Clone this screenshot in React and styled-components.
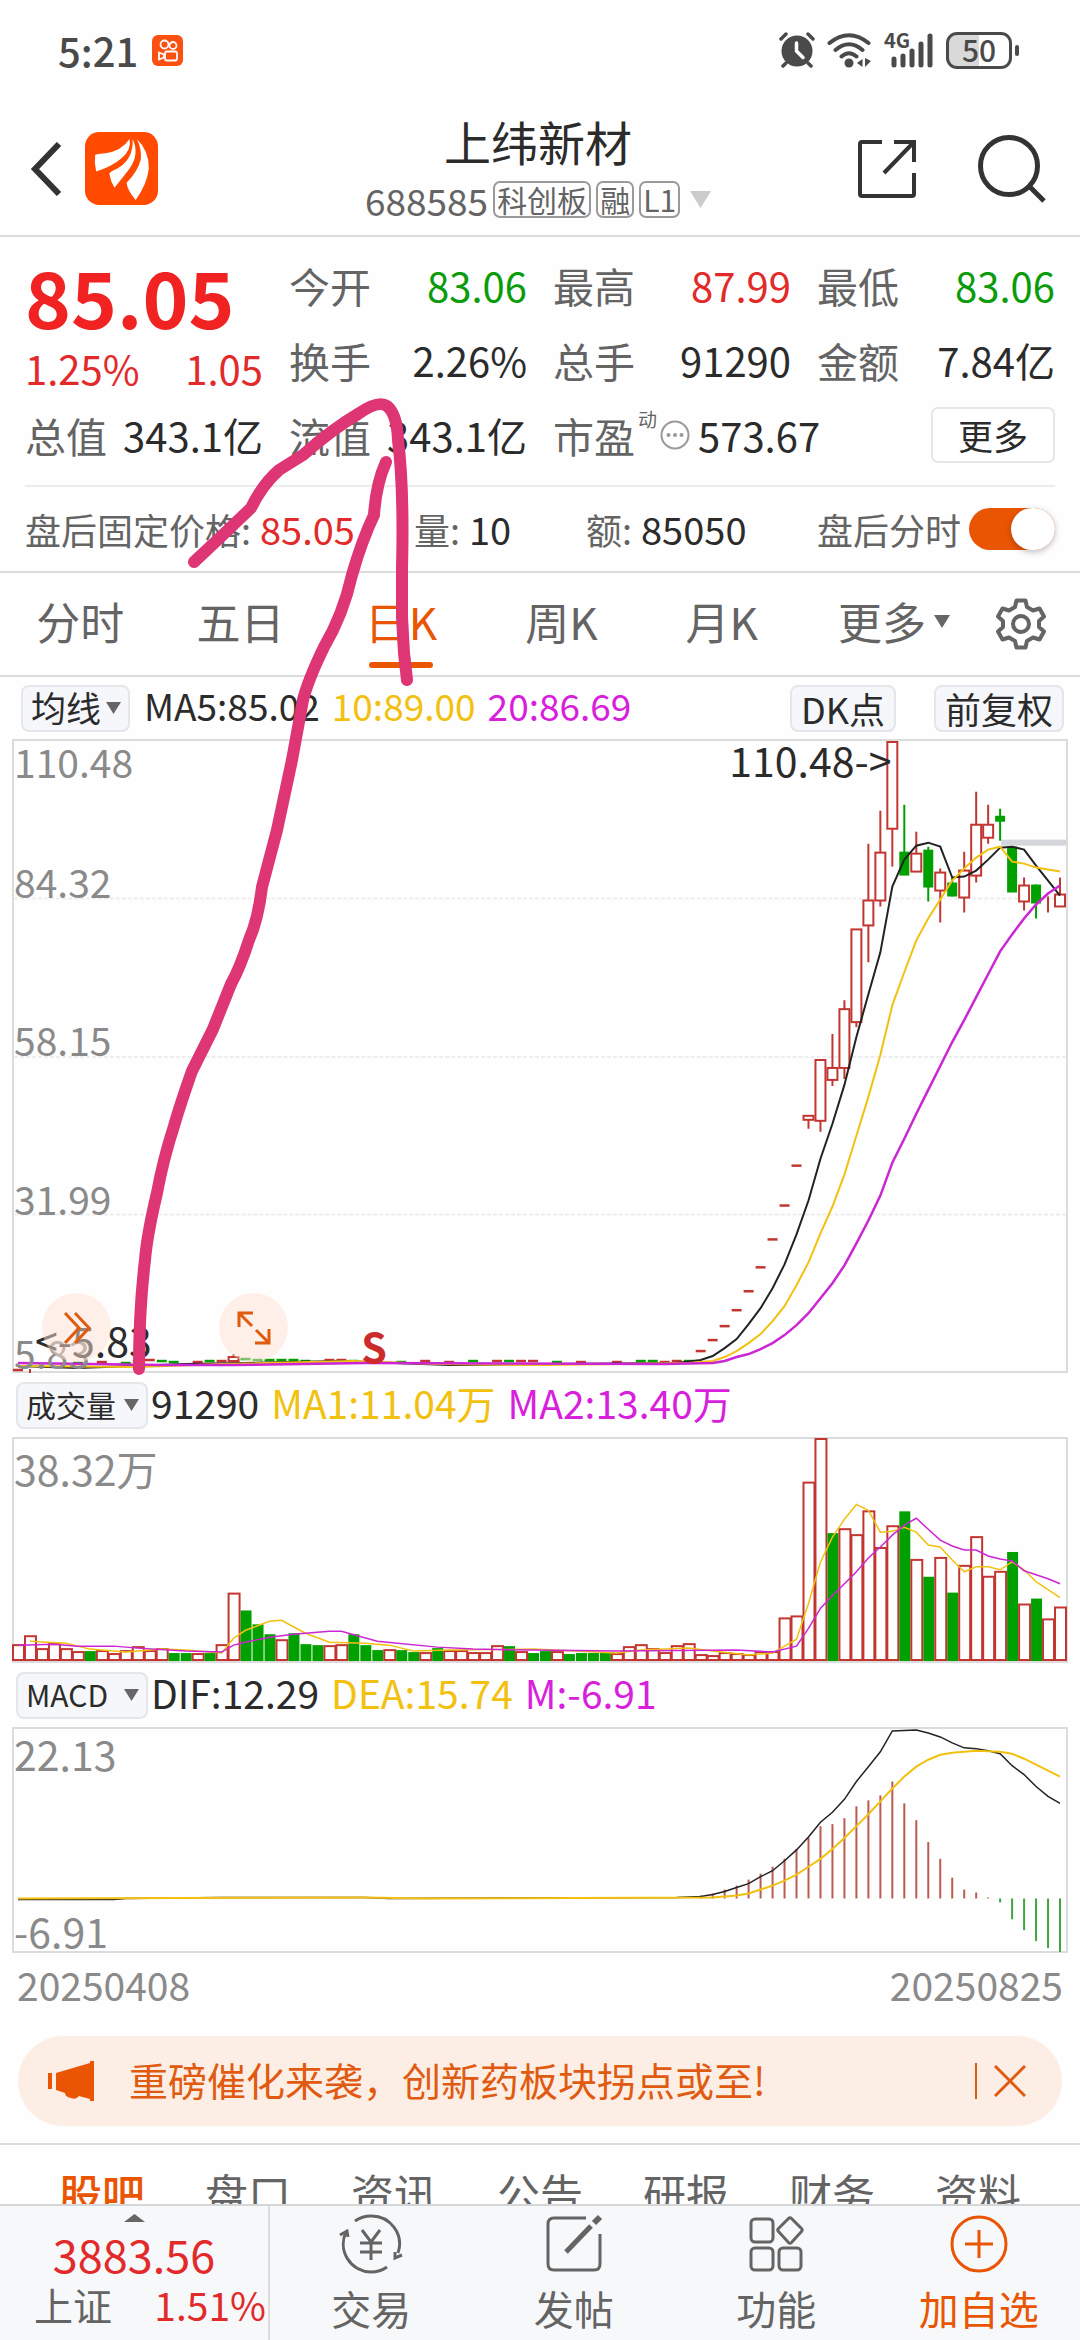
import React, { useState } from 'react';
import styled, { createGlobalStyle } from 'styled-components';

const RED = '#e22a2a';
const GREEN = '#0a9c0a';
const ORANGE = '#ea5504';
const INK = '#2b2b2b';
const GRAY = '#646464';
const YELLOW = '#f2c10f';
const PURPLE = '#d81fdc';
const BAR_RED = '#c23531';
const BAR_GREEN = '#00a000';

const STEP = 12;

// [index, high, top, bottom, low, up?] in chart units
const candles = [
    [66, 376, 376, 380, 389, 1], [67, 320, 320, 381, 392, 1], [68, 294, 328, 340, 346, 1],
    [69, 260, 269, 328, 339, 1], [70, 189, 189, 282, 287, 1], [71, 103, 160, 185, 222, 1],
    [72, 70, 112, 160, 166, 1], [73, 1, 1, 88, 126, 1], [74, 64, 112, 134, 134, 0],
    [75, 91, 113, 131, 131, 1], [76, 106, 110, 146, 161, 0], [77, 128, 132, 150, 182, 1],
    [78, 137, 143, 155, 156, 0], [79, 111, 130, 157, 172, 1], [80, 51, 84, 135, 142, 1],
    [81, 64, 84, 97, 103, 1], [82, 68, 76, 80, 100, 0], [83, 107, 107, 151, 151, 0],
    [84, 137, 145, 161, 170, 1], [85, 144, 145, 162, 178, 0], [86, 156, 161, 161, 172, 1],
    [87, 137, 154, 166, 166, 1], [18, 615, 618, 622, 622, 1], [1, 630, 631, 631, 634, 1],
];

// one-price days, drawn as short dashes: [index, y, up?]
const dashes = [
    [0, 631, 1], [5, 624, 0], [7, 623, 1], [9, 624, 0], [10, 622, 1], [11, 621, 1], [12, 622, 0],
    [13, 623, 0], [15, 623, 1], [16, 622, 0], [17, 622, 1], [19, 620, 0], [20, 621, 0], [21, 621, 0],
    [22, 621, 0], [23, 621, 0], [24, 622, 0], [26, 621, 1], [27, 621, 1], [28, 622, 0], [30, 623, 0],
    [32, 623, 0], [34, 622, 1], [36, 623, 1], [38, 622, 0], [40, 622, 1], [41, 622, 0], [42, 622, 1],
    [43, 622, 1], [45, 623, 0], [47, 623, 1], [50, 623, 1], [52, 622, 0], [53, 622, 0], [54, 623, 1],
    [55, 622, 1], [56, 622, 0], [57, 612, 1], [58, 601, 1], [59, 587, 1], [60, 571, 1], [61, 552, 1],
    [62, 528, 1], [63, 500, 1], [64, 466, 1], [65, 426, 1],
];

const ma5 = [
    [0, 627], [5, 629], [14, 625], [27, 622], [36, 626], [45, 625], [55, 624], [57, 621], [58, 617], [59, 609],
    [60, 600], [61, 585], [62, 569], [63, 549], [64, 525], [65, 495], [66, 461], [67, 419], [68, 384],
    [69, 345], [70, 297], [71, 254], [72, 212], [73, 146], [74, 119], [75, 105], [76, 102], [77, 106],
    [78, 137], [79, 136], [80, 130], [81, 119], [82, 107], [83, 106], [84, 109], [85, 125], [86, 140], [87, 155],
];
const ma10 = [
    [0, 627], [10, 628], [17, 625], [28, 622], [35, 625], [44, 626], [56, 624], [58, 622], [59, 618], [60, 612],
    [61, 604], [62, 595], [63, 582], [64, 567], [65, 546], [66, 523], [67, 494], [68, 467], [69, 435],
    [70, 396], [71, 357], [72, 315], [73, 265], [74, 232], [75, 200], [76, 178], [77, 159], [78, 140],
    [79, 128], [80, 117], [81, 109], [82, 106], [83, 121], [84, 123], [85, 127], [86, 129], [87, 131],
];
const ma20 = [
    [0, 624], [12, 626], [18, 626], [29, 624], [54, 625], [58, 624], [59, 622], [60, 618], [61, 615], [62, 610],
    [63, 604], [64, 596], [65, 586], [66, 574], [67, 559], [68, 544], [69, 526], [70, 504], [71, 481],
    [72, 456], [73, 423], [74, 399], [75, 374], [76, 350], [77, 326], [78, 302], [79, 280], [80, 257],
    [81, 234], [82, 211], [83, 194], [84, 178], [85, 164], [86, 153], [87, 145],
];

// negative = green day
const volumes = [
    18, 27, 14, 19, 14, 11, -11, 12, 9, 12, 16, 12, 14, -9, -9, 9, -9, 18, 70, -52, -38, -28,
    23, -29, -18, -17, 17, 18, -28, -17, -12, 13, -12, -10, 10, -14, 12, 12, 10, 10, 17, -16,
    11, -9, -11, 11, -8, -9, -9, -9, 9, 16, 18, 14, 10, 17, 19, 8, 7, 10, 9, 8, 11, 11, 45, 47,
    182, 226, -130, 135, 129, 153, 116, 138, -152, 104, -86, 106, -70, 98, 127, 87, 92, -111,
    59, -64, 44, 56,
];
const volMa1 = [
    [1, 204], [4, 206], [6, 212], [9, 215], [12, 212], [14, 213], [17, 216], [18, 201], [19, 193], [21, 184],
    [22, 183], [24, 196], [26, 205], [29, 206], [31, 208], [33, 214], [36, 213], [43, 212], [50, 216],
    [52, 213], [56, 211], [58, 214], [61, 218], [63, 216], [65, 202], [66, 166], [67, 124], [68, 99],
    [69, 81], [70, 66], [71, 72], [72, 94], [73, 93], [74, 89], [75, 94], [76, 107], [77, 109], [78, 122],
    [79, 134], [80, 129], [81, 129], [82, 132], [83, 124], [84, 132], [85, 144], [86, 152], [87, 160],
];
const volMa2 = [
    [0, 208], [3, 207], [5, 209], [8, 209], [10, 211], [14, 214], [17, 215], [18, 208], [19, 205], [21, 200],
    [23, 197], [26, 194], [27, 194], [30, 204], [35, 210], [38, 212], [43, 213], [50, 214], [60, 213],
    [63, 215], [65, 209], [66, 191], [67, 171], [68, 158], [69, 146], [70, 134], [71, 120], [72, 109],
    [73, 97], [74, 87], [75, 80], [76, 91], [77, 102], [78, 108], [79, 112], [80, 112], [81, 118],
    [82, 121], [83, 123], [84, 133], [85, 137], [86, 141], [87, 146],
];

const MACD_ZERO = 171;
const macdFrom = 57;
const macdBars = [
    169, 167, 163, 159, 153, 147, 140, 132, 122, 111, 99, 97, 91, 79, 73, 68, 54, 76, 93, 115,
    132, 151, 163, 166, 171, 176, 193, 204, 215, 222, 226,
];
const dif = [
    [0, 172], [8, 172], [9, 171], [17, 170], [29, 170], [31, 171], [55, 170], [57, 169], [58, 167], [59, 164],
    [60, 160], [61, 156], [62, 149], [63, 143], [64, 133], [65, 122], [66, 109], [67, 94], [68, 84],
    [69, 71], [70, 53], [71, 38], [72, 23], [73, 2], [75, 1], [76, 4], [77, 8], [78, 14], [79, 19],
    [80, 20], [81, 22], [82, 25], [83, 37], [84, 46], [85, 58], [86, 68], [87, 75],
];
const dea = [
    [0, 171], [29, 170], [34, 171], [58, 170], [60, 168], [61, 166], [62, 162], [63, 158], [64, 153], [65, 147],
    [66, 139], [67, 131], [68, 121], [69, 110], [70, 98], [71, 86], [72, 73], [73, 60], [74, 48],
    [75, 38], [76, 31], [77, 26], [78, 24], [79, 23], [80, 22], [82, 23], [83, 25], [84, 30], [85, 36],
    [86, 42], [87, 48],
];

const cx = (i) => i * STEP + 4;
const toPoints = (list) => list.map(([i, y]) => `${cx(i)},${y}`).join(' ');

const GlobalStyle = createGlobalStyle`
    * { box-sizing: border-box; }
    body {
        margin: 0;
        background: #fefefe;
        color: ${INK};
        font-family: 'Noto Sans CJK SC', 'Noto Sans', sans-serif;
    }
    button, select, input { font: inherit; color: inherit; margin: 0; }
    button { border: 0; padding: 0; background: none; }
    svg { display: block; flex: none; }
`;

const Page = styled.div`
    position: relative;
    display: flex;
    flex-direction: column;
    height: 100vh;
    overflow: hidden;
`;

const Content = styled.main`
    flex: 1;
    min-height: 0;
    overflow: hidden;
`;

const StatusBar = styled.div`
    display: flex;
    align-items: center;
    justify-content: space-between;
    height: 100px;
    padding: 0 62px 0 58px;
    color: #4a4a4a;
`;

const StatusGroup = styled.div`
    display: flex;
    align-items: center;
    gap: ${({ $gap }) => $gap}px;
`;

const Clock = styled.span`
    font-size: 40px;
    font-weight: 500;
    line-height: 48px;
`;

const Signal = styled.span`
    position: relative;
    display: block;
`;

const NetworkType = styled.span`
    position: absolute;
    top: -5px;
    left: 0;
    font-size: 20px;
    font-weight: 700;
    line-height: 24px;
`;

const Battery = styled.span`
    position: relative;
    width: 66px;
    height: 37px;
    margin-right: 6px;
    border: 3px solid #4a4a4a;
    border-radius: 11px;
    background: linear-gradient(90deg, #d9d9d9 50%, #fff 50%);
    font-size: 30px;
    font-weight: 500;
    line-height: 29px;
    text-align: center;

    &::after {
        content: '';
        position: absolute;
        top: 10px;
        right: -10px;
        width: 4px;
        height: 11px;
        border-radius: 2px;
        background: #4a4a4a;
    }
`;

const Header = styled.header`
    display: grid;
    grid-template-columns: 1fr auto 1fr;
    align-items: center;
    height: 137px;
    padding: 2px 34px 0 30px;
    border-bottom: 2px solid #dcdcdc;
`;

const HeaderSide = styled.div`
    display: flex;
    align-items: center;
    justify-content: ${({ $end }) => ($end ? 'flex-end' : 'flex-start')};
    gap: ${({ $end }) => ($end ? 62 : 23)}px;
`;

const TitleBox = styled.div`
    display: flex;
    flex-direction: column;
    align-items: center;
    padding-bottom: 4px;
`;

const Title = styled.h1`
    margin: 0;
    font-size: 47px;
    font-weight: 400;
    line-height: 66px;
`;

const SubTitle = styled.div`
    display: flex;
    align-items: center;
    gap: 5px;
    color: ${GRAY};
    font-size: 37px;
    line-height: 52px;

    svg { margin-left: 5px; }
`;

const Tag = styled.span`
    padding: 0 2px;
    border: 2px solid #9a9a9a;
    border-radius: 7px;
    font-size: 30px;
    line-height: 33px;
`;

const Quote = styled.section`
    padding: 10px 25px 0;
    border-bottom: 2px solid #dcdcdc;
`;

const QuoteGrid = styled.div`
    display: grid;
    grid-template-columns: repeat(4, 1fr);
    grid-auto-rows: 75px;
    column-gap: 26px;
    padding-bottom: 13px;
    border-bottom: 2px solid #ececec;
`;

const PriceBox = styled.div`
    grid-row: span 2;
    color: ${RED};
`;

const Price = styled.div`
    color: #f02222;
    font-size: 78px;
    font-weight: 700;
    line-height: 96px;
`;

const Row = styled.div`
    display: flex;
    align-items: center;
    justify-content: space-between;
    grid-column: span ${({ $span }) => $span || 1};
    font-size: 40px;
    line-height: 50px;
    white-space: nowrap;
`;

const Label = styled.span`
    color: ${GRAY};
`;

const RowLabel = styled(Label)`
    font-size: 41px;
`;

const Value = styled.span`
    color: ${({ $color }) => $color || INK};
`;

const PeGroup = styled.span`
    display: flex;
    align-items: center;
`;

const Dynamic = styled.sup`
    align-self: flex-start;
    margin: 0 3px;
    color: ${GRAY};
    font-size: 19px;
    line-height: 18px;
`;

const PeValue = styled(Value)`
    margin-left: 8px;
`;

const MoreButton = styled.button`
    width: 124px;
    height: 56px;
    border: 2px solid #e6e6e6;
    border-radius: 7px;
    background: #fff;
    font-size: 35px;
    line-height: 48px;
`;

const AfterHours = styled.div`
    display: grid;
    grid-template-columns: 389px 172px 1fr auto;
    align-items: center;
    height: 84px;
    font-size: 36px;
    line-height: 46px;
    white-space: nowrap;
`;

const Pair = styled.span`
    display: flex;
    align-items: center;
    gap: 9px;
`;

const Figure = styled.span`
    color: ${({ $color }) => $color || INK};
    font-size: 38px;
`;

const SwitchLabel = styled.label`
    display: flex;
    align-items: center;
    gap: 8px;
    color: ${GRAY};
`;

const Switch = styled.input`
    appearance: none;
    display: flex;
    align-items: center;
    width: 86px;
    height: 42px;
    border-radius: 21px;
    background: ${ORANGE};

    &::after {
        content: '';
        width: 44px;
        height: 42px;
        margin-left: 42px;
        border-radius: 21px;
        background: #fff;
        box-shadow: 0 2px 6px rgba(0, 0, 0, 0.25);
    }
    &:not(:checked) { background: #ccc; }
    &:not(:checked)::after { margin-left: 0; }
`;

const Tabs = styled.nav`
    display: grid;
    grid-template-columns: repeat(5, 1fr) 184px 94px;
    align-items: center;
    justify-items: center;
    height: 104px;
    border-bottom: 2px solid #dcdcdc;
`;

const Tab = styled.button`
    position: relative;
    display: flex;
    align-items: center;
    gap: 8px;
    height: 102px;
    color: ${({ $active }) => ($active ? ORANGE : GRAY)};
    font-size: 44px;
    line-height: 96px;
    padding-bottom: 6px;

    &::after {
        content: '';
        position: absolute;
        bottom: 7px;
        left: 4px;
        right: 4px;
        height: 6px;
        border-radius: 3px;
        background: ${({ $active }) => ($active ? ORANGE : 'transparent')};
    }
`;

const SettingsButton = styled.button`
    justify-self: start;
    margin-left: 9px;
`;

const Indicator = styled.div`
    display: flex;
    align-items: center;
    height: ${({ $small }) => ($small ? 62 : 64)}px;
    padding: ${({ $small }) => ($small ? '0 16px 0 21px' : '0 16px')};
    font-size: ${({ $small }) => ($small ? 37 : 39)}px;
    line-height: 46px;
    white-space: nowrap;
`;

const Readings = styled.span`
    display: flex;
    flex: 1;
    gap: 12px;
    margin-left: ${({ $gap }) => $gap}px;
    padding-bottom: 6px;
`;

const Picker = styled.label`
    position: relative;
    display: flex;
    align-items: center;

    svg {
        position: absolute;
        right: 9px;
        pointer-events: none;
    }
`;

const Select = styled.select`
    appearance: none;
    width: ${({ $wide }) => ($wide ? 132 : 109)}px;
    height: 47px;
    padding: 0 8px 3px;
    border: 2px solid #e4e6ea;
    border-radius: 8px;
    background: #f6f7fa;
    font-size: ${({ $wide }) => ($wide ? 30 : 35)}px;
    line-height: 40px;
`;

const Chip = styled.button`
    height: 47px;
    margin-left: ${({ $gap }) => $gap || 0}px;
    padding: 0 9px;
    border: 2px solid #e4e6ea;
    border-radius: 8px;
    background: #f6f7fa;
    font-size: 36px;
    line-height: 38px;
`;

const ChartBox = styled.div`
    position: relative;
    height: ${({ $h }) => $h}px;
    margin: 0 12px;
    border: 2px solid #dcdcdc;

    > svg {
        width: 100%;
        height: 100%;
        overflow: visible;
    }
`;

// scale labels lie over the plot, placed by their middle line
const ScaleLabel = styled.span`
    position: absolute;
    top: ${({ $y }) => $y}px;
    left: 0;
    color: #8a8a8a;
    font-size: ${({ $big }) => ($big ? 41 : 39)}px;
    line-height: 50px;
    transform: translateY(-50%);
`;

const PlotNote = styled(ScaleLabel)`
    left: ${({ $x }) => $x}%;
    color: ${({ $color }) => $color || INK};
    font-size: 41px;
    font-weight: ${({ $bold }) => ($bold ? 700 : 400)};
`;

const RoundButton = styled.button`
    position: absolute;
    bottom: 9px;
    left: ${({ $x }) => $x}px;
    display: flex;
    align-items: center;
    justify-content: center;
    width: 69px;
    height: 69px;
    border-radius: 50%;
    background: rgba(253, 226, 210, 0.5);
`;

const Dates = styled.div`
    display: flex;
    justify-content: space-between;
    padding: 0 17px;
    color: #8a8a8a;
    font-size: 39px;
    line-height: 62px;
`;

const Banner = styled.aside`
    display: flex;
    align-items: center;
    height: 90px;
    margin: 21px 18px 17px;
    padding: 0 36px 0 30px;
    border-radius: 45px;
    background: #fdeee5;
    color: #e05a10;
    font-size: 39px;
    line-height: 50px;
`;

const BannerLink = styled.a`
    flex: 1;
    margin-left: 34px;
    padding-bottom: 4px;
    color: inherit;
    text-decoration: none;
`;

const CloseButton = styled.button`
    height: 36px;
    padding-left: 17px;
    border-left: 2px solid #e05a10;
`;

const SectionTabs = styled.nav`
    display: grid;
    grid-template-columns: repeat(7, 1fr);
    padding: 14px 29px 0;
    border-top: 2px solid #dcdcdc;
`;

const SectionTab = styled.button`
    color: ${({ $active }) => ($active ? ORANGE : GRAY)};
    font-size: 43px;
    font-weight: ${({ $active }) => ($active ? 500 : 400)};
    line-height: 66px;
`;

const BottomBar = styled.footer`
    display: grid;
    grid-template-columns: 1fr 3fr;
    height: 136px;
    border-top: 2px solid #d6d6d8;
    background: #f7f8fa;
`;

const IndexBox = styled.div`
    display: flex;
    flex-direction: column;
    align-items: center;
    padding-top: 8px;
    border-right: 2px solid #dcdcdc;
    color: ${RED};
`;

const IndexValue = styled.div`
    margin-top: 6px;
    font-size: 45px;
    line-height: 52px;
`;

const IndexRow = styled.div`
    display: flex;
    justify-content: space-between;
    align-self: stretch;
    padding: 0 2px 0 34px;
    font-size: 39px;
    line-height: 48px;
`;

const Actions = styled.div`
    display: grid;
    grid-template-columns: repeat(4, 1fr);
`;

const Action = styled.button`
    display: flex;
    flex-direction: column;
    align-items: center;
    padding-top: 8px;
    color: ${({ $accent }) => ($accent ? ORANGE : GRAY)};
    font-size: 40px;
    line-height: 60px;
    gap: 4px;
`;

// hand-drawn arrow across the quote and the chart
const Doodle = styled.svg`
    position: absolute;
    top: 0;
    left: 0;
    width: 100%;
    height: 1400px;
    pointer-events: none;
`;

const Triangle = ({ size = 15, color = '#666', up }) => (
    <svg width={size} height={Math.round(size * (up ? 0.4 : 0.8))} viewBox="0 0 10 8" preserveAspectRatio="none" aria-hidden="true">
        <path d={up ? 'M0 8 5 0l5 8z' : 'M0 0h10L5 8z'} fill={color} />
    </svg>
);

const AlarmIcon = () => (
    <svg width="36" height="36" viewBox="0 0 36 36" fill="none" stroke="#4a4a4a" strokeLinecap="round">
        <circle cx="18" cy="19" r="15.5" fill="#4a4a4a" stroke="none" />
        <path d="M2 7l5-5M34 7l-5-5M7 31l-3 3M29 31l3 3" strokeWidth="3.5" />
        <path d="M17.5 11v8l6.5 6.5" stroke="#fff" strokeWidth="3.5" />
    </svg>
);

const WifiIcon = () => (
    <svg width="45" height="35" viewBox="0 0 45 35" fill="none" stroke="#4a4a4a" strokeWidth="4" strokeLinecap="round">
        <path d="M2.5 10Q22 -5.5 41.5 10M8.5 17Q22 5.5 35.5 17M14.5 23.5Q22 17 29.5 23.5" />
        <circle cx="22" cy="30" r="4.5" fill="#4a4a4a" stroke="none" />
        <path d="M30 30l5.5-4v8zM38 25v9l6-6z" fill="#4a4a4a" stroke="none" />
    </svg>
);

const KuaishouIcon = () => (
    <svg width="31" height="31" viewBox="0 0 31 31" fill="none" stroke="#fff" strokeWidth="1.8">
        <rect width="31" height="31" rx="6" fill="#fa5112" stroke="none" />
        <circle cx="12.5" cy="9.5" r="4" />
        <circle cx="21" cy="10.5" r="3.5" />
        <rect x="13" y="16.5" width="12" height="9" rx="2" />
        <path d="M7 17.5v7l5-2v-3z" />
    </svg>
);

const LogoIcon = () => (
    <svg width="73" height="73" viewBox="0 0 72 72">
        <rect width="72" height="72" rx="14" fill="#ff4a00" />
        <path
            fill="#fff"
            d="M10 23Q9 22 20 21Q36 19 44 7Q46 18 36 26Q27 34 11 39Q9 31 10 23zM47 7Q54 22 44 36Q38 44 29 55Q25 48 24 41Q25 39 32 36Q48 27 47 7zM51 7Q63 18 63 36Q61 52 50 67Q42 58 41 50Q52 39 55 27Q56 16 51 7z"
        />
    </svg>
);

const GearIcon = () => (
    <svg width="52" height="52" viewBox="0 0 52 52" fill="none" stroke="#646464" strokeWidth="4" strokeLinejoin="round">
        <path d="M21.5 2.5h9l1.5 6.5 6 3.5 6.5-2 4.5 8-5 4.5v6l5 4.5-4.5 8-6.5-2-6 3.500-1.500 6.500h-9L20 43l-6-3.500-6.500 2-4.500-8L8 29v-6l-5-4.500 4.500-8 6.500 2L20 9z" />
        <circle cx="26" cy="26" r="8" />
    </svg>
);

const PriceChart = () => (
    <svg viewBox="0 0 1054 632" preserveAspectRatio="none">
        {[158, 317, 475].map((y) => (
            <path key={y} d={`M0 ${y}h1054`} stroke="#ededee" strokeWidth="2" strokeDasharray="4 2" />
        ))}
        <rect x="989" y="99" width="65" height="6" fill="#d4d6db" />
        {dashes.map(([i, y, up]) => (
            <path key={i} d={`M${cx(i) - 5} ${y}h10`} stroke={up ? BAR_RED : BAR_GREEN} strokeWidth="2.5" />
        ))}
        {candles.map(([i, high, top, bottom, low, up]) => (
            <g key={i} stroke={up ? BAR_RED : BAR_GREEN} strokeWidth="2">
                <path d={`M${cx(i)} ${high}V${top}M${cx(i)} ${bottom}V${low}`} />
                <rect
                    x={cx(i) - (up ? 5 : 4)}
                    y={top}
                    width={up ? 10 : 8}
                    height={bottom - top}
                    fill={up ? '#fff' : BAR_GREEN}
                />
            </g>
        ))}
        <g fill="none" strokeWidth="2">
            <polyline points={toPoints(ma5)} stroke="#222" />
            <polyline points={toPoints(ma10)} stroke={YELLOW} />
            <polyline points={toPoints(ma20)} stroke="#cc26d4" strokeWidth="2.5" />
        </g>
    </svg>
);

const VolumeChart = () => (
    <svg viewBox="0 0 1054 224" preserveAspectRatio="none">
        {volumes.map((v, i) => {
            const h = Math.abs(v);
            return v > 0 ? (
                <rect key={i} x={cx(i) - 5} y={226 - h} width="11" height={h - 3} fill="none" stroke={BAR_RED} strokeWidth="2" />
            ) : (
                <rect key={i} x={cx(i) - 5} y={225 - h} width="11" height={h - 1} fill={BAR_GREEN} />
            );
        })}
        <g fill="none" strokeWidth="1.5">
            <polyline points={toPoints(volMa1)} stroke={YELLOW} />
            <polyline points={toPoints(volMa2)} stroke="#cc26d4" />
        </g>
    </svg>
);

const MacdChart = () => (
    <svg viewBox="0 0 1054 224" preserveAspectRatio="none">
        {macdBars.map((y, n) => (
            <path
                key={n}
                d={`M${cx(n + macdFrom)} ${MACD_ZERO}V${y - 1}`}
                stroke={y > MACD_ZERO ? '#3fa63f' : '#bb5a52'}
                strokeWidth="2"
            />
        ))}
        <g fill="none" strokeWidth="1.5">
            <polyline points={toPoints(dif)} stroke="#222" />
            <polyline points={toPoints(dea)} stroke={YELLOW} strokeWidth="2" />
        </g>
    </svg>
);

const TradeIcon = () => (
    <svg width="66" height="60" viewBox="0 0 66 60" fill="none" stroke="#646464" strokeWidth="3">
        <path d="M17 7Q24 2 33 2a28 28 0 0 1 27 37M49 53q-7 5-16 5A28 28 0 0 1 8 18" />
        <path d="M2 21l7-4 1 6M57 38l0 6 7-3" />
        <path d="M24 16l9 12 9-12M33 28v18M22 29h22M22 38h22" />
    </svg>
);

const PostIcon = () => (
    <svg width="58" height="60" viewBox="0 0 58 60" fill="none" stroke="#646464">
        <path d="M41 4H9q-6 0-6 6v40q0 6 6 6h40q6 0 6-6V20" strokeWidth="3" />
        <path d="M21 38L46 12" strokeWidth="5" />
        <path d="M49 9l6-6" strokeWidth="6" />
    </svg>
);

const AppsIcon = () => (
    <svg width="56" height="60" viewBox="0 0 56 60" fill="none" stroke="#646464" strokeWidth="3">
        <rect x="3" y="5" width="22" height="23" rx="4" />
        <rect x="3" y="34" width="22" height="22" rx="4" />
        <rect x="31" y="34" width="22" height="22" rx="4" />
        <path d="M40.5 4.5q1.5-1.5 3 0l10 10q1.5 1.5 0 3l-10 11q-1.5 1.5-3 0l-10-11q-1.5-1.5 0-3z" />
    </svg>
);

const AddIcon = () => (
    <svg width="60" height="60" viewBox="0 0 60 60" fill="none" stroke={ORANGE} strokeWidth="3">
        <circle cx="30" cy="30" r="27" />
        <path d="M30 16v28M16 30h28" />
    </svg>
);

const sections = ['股吧', '盘口', '资讯', '公告', '研报', '财务', '资料'];

const App = () => {
    const [period, setPeriod] = useState('日K');
    const [section, setSection] = useState('股吧');

    return (
        <Page>
            <GlobalStyle />
            <StatusBar>
                <StatusGroup $gap={14}>
                    <Clock>5:21</Clock>
                    <KuaishouIcon />
                </StatusGroup>
                <StatusGroup $gap={12}>
                    <AlarmIcon />
                    <WifiIcon />
                    <Signal>
                        <NetworkType>4G</NetworkType>
                        <svg width="50" height="35" viewBox="0 0 50 35" stroke="#4a4a4a" strokeWidth="5" strokeLinecap="round">
                            <path d="M10 26v6M19 23v9M28 18v14M37 11v21M46 3v29" />
                        </svg>
                    </Signal>
                    <Battery>50</Battery>
                </StatusGroup>
            </StatusBar>

            <Header>
                <HeaderSide>
                    <button aria-label="返回">
                        <svg width="32" height="54" viewBox="0 0 32 54" fill="none" stroke="#333" strokeWidth="6">
                            <path d="M29 2L5 27l24 25" />
                        </svg>
                    </button>
                    <LogoIcon />
                </HeaderSide>
                <TitleBox>
                    <Title>上纬新材</Title>
                    <SubTitle>
                        688585
                        <Tag>科创板</Tag>
                        <Tag>融</Tag>
                        <Tag>L1</Tag>
                        <Triangle size={21} color="#cbcbcb" />
                    </SubTitle>
                </TitleBox>
                <HeaderSide $end>
                    <button aria-label="分享">
                        <svg width="58" height="58" viewBox="0 0 58 58" fill="none" stroke="#333" strokeWidth="4">
                            <path d="M24 2H4q-2 0-2 2v50q0 2 2 2h50q2 0 2-2V33M36 2h20v20M56 2L26 33" />
                        </svg>
                    </button>
                    <button aria-label="搜索">
                        <svg width="68" height="68" viewBox="0 0 68 68" fill="none" stroke="#333" strokeWidth="5">
                            <circle cx="31" cy="31" r="28.5" />
                            <path d="M51 51l15 15" />
                        </svg>
                    </button>
                </HeaderSide>
            </Header>

            <Content>
                <Quote>
                    <QuoteGrid>
                        <PriceBox>
                            <Price>85.05</Price>
                            <Row><span>1.25%</span><span>1.05</span></Row>
                        </PriceBox>
                        <Row><RowLabel>今开</RowLabel><Value $color={GREEN}>83.06</Value></Row>
                        <Row><RowLabel>最高</RowLabel><Value $color={RED}>87.99</Value></Row>
                        <Row><RowLabel>最低</RowLabel><Value $color={GREEN}>83.06</Value></Row>
                        <Row><RowLabel>换手</RowLabel><Value>2.26%</Value></Row>
                        <Row><RowLabel>总手</RowLabel><Value>91290</Value></Row>
                        <Row><RowLabel>金额</RowLabel><Value>7.84亿</Value></Row>
                        <Row><RowLabel>总值</RowLabel><Value>343.1亿</Value></Row>
                        <Row><RowLabel>流值</RowLabel><Value>343.1亿</Value></Row>
                        <Row $span={2}>
                            <PeGroup>
                                <RowLabel>市盈</RowLabel>
                                <Dynamic>动</Dynamic>
                                <svg width="30" height="30" viewBox="0 0 30 30" fill="#999">
                                    <circle cx="15" cy="15" r="13.5" fill="none" stroke="#999" strokeWidth="2" />
                                    <circle cx="8.5" cy="15" r="2" />
                                    <circle cx="15" cy="15" r="2" />
                                    <circle cx="21.5" cy="15" r="2" />
                                </svg>
                                <PeValue>573.67</PeValue>
                            </PeGroup>
                            <MoreButton>更多</MoreButton>
                        </Row>
                    </QuoteGrid>
                    <AfterHours>
                        <Pair><Label>盘后固定价格:</Label><Figure $color={RED}>85.05</Figure></Pair>
                        <Pair><Label>量:</Label><Figure>10</Figure></Pair>
                        <Pair><Label>额:</Label><Figure>85050</Figure></Pair>
                        <SwitchLabel>
                            盘后分时
                            <Switch type="checkbox" defaultChecked />
                        </SwitchLabel>
                    </AfterHours>
                </Quote>

                <Tabs>
                    {['分时', '五日', '日K', '周K', '月K'].map((name) => (
                        <Tab key={name} $active={name === period} onClick={() => setPeriod(name)}>{name}</Tab>
                    ))}
                    <Tab>更多<Triangle size={16} /></Tab>
                    <SettingsButton aria-label="设置"><GearIcon /></SettingsButton>
                </Tabs>

                <Indicator $small>
                    <Picker>
                        <Select aria-label="主图指标"><option>均线</option></Select>
                        <Triangle />
                    </Picker>
                    <Readings $gap={14}>
                        <Value>MA5:85.02</Value>
                        <Value $color={YELLOW}>10:89.00</Value>
                        <Value $color={PURPLE}>20:86.69</Value>
                    </Readings>
                    <Chip>DK点</Chip>
                    <Chip $gap={38}>前复权</Chip>
                </Indicator>
                <ChartBox $h={634}>
                    <ScaleLabel $y={20}>110.48</ScaleLabel>
                    <ScaleLabel $y={140}>84.32</ScaleLabel>
                    <ScaleLabel $y={298}>58.15</ScaleLabel>
                    <ScaleLabel $y={457}>31.99</ScaleLabel>
                    <ScaleLabel $y={611}>5.83</ScaleLabel>
                    <PriceChart />
                    <PlotNote $x={68} $y={18}>110.48-&gt;</PlotNote>
                    <PlotNote $x={2} $y={598}>&lt;-5.83</PlotNote>
                    <PlotNote $x={33} $y={604} $color="#cc2b2b" $bold>S</PlotNote>
                    <RoundButton $x={28} aria-label="展开">
                        <svg width="30" height="34" viewBox="0 0 30 34" fill="none" stroke="#e05a10" strokeWidth="3">
                            <path d="M3 2l14 15L3 32M13 2l14 15-14 15" />
                        </svg>
                    </RoundButton>
                    <RoundButton $x={205} aria-label="全屏">
                        <svg width="34" height="34" viewBox="0 0 34 34" fill="none" stroke="#e05a10" strokeWidth="3">
                            <path d="M2 16V2h14M2 2l13 13M32 18v14H18M32 32L19 19" />
                        </svg>
                    </RoundButton>
                </ChartBox>

                <Indicator>
                    <Picker>
                        <Select $wide aria-label="副图指标一"><option>成交量</option></Select>
                        <Triangle />
                    </Picker>
                    <Readings $gap={3}>
                        <Value>91290</Value>
                        <Value $color={YELLOW}>MA1:11.04万</Value>
                        <Value $color={PURPLE}>MA2:13.40万</Value>
                    </Readings>
                </Indicator>
                <ChartBox $h={226}>
                    <ScaleLabel $big $y={29}>38.32万</ScaleLabel>
                    <VolumeChart />
                </ChartBox>

                <Indicator>
                    <Picker>
                        <Select $wide aria-label="副图指标二"><option>MACD</option></Select>
                        <Triangle />
                    </Picker>
                    <Readings $gap={3}>
                        <Value>DIF:12.29</Value>
                        <Value $color={YELLOW}>DEA:15.74</Value>
                        <Value $color={PURPLE}>M:-6.91</Value>
                    </Readings>
                </Indicator>
                <ChartBox $h={226}>
                    <ScaleLabel $big $y={24}>22.13</ScaleLabel>
                    <ScaleLabel $big $y={201}>-6.91</ScaleLabel>
                    <MacdChart />
                </ChartBox>
                <Dates><span>20250408</span><span>20250825</span></Dates>

                <Banner>
                    <svg width="47" height="40" viewBox="0 0 47 40" fill={ORANGE}>
                        <path d="M0 12h4v16H0zM8 12L42 2V0h4v40h-4v-2l-11-3q-3 4-8 2-6-1-6-5l-9-3z" />
                    </svg>
                    <BannerLink href="#news">重磅催化来袭，创新药板块拐点或至!</BannerLink>
                    <CloseButton aria-label="关闭">
                        <svg width="32" height="32" viewBox="0 0 32 32" stroke="#e05a10" strokeWidth="3">
                            <path d="M1 1l30 30M31 1L1 31" />
                        </svg>
                    </CloseButton>
                </Banner>

                <SectionTabs>
                    {sections.map((name) => (
                        <SectionTab key={name} $active={name === section} onClick={() => setSection(name)}>{name}</SectionTab>
                    ))}
                </SectionTabs>
            </Content>

            <BottomBar>
                <IndexBox>
                    <Triangle size={21} up />
                    <IndexValue>3883.56</IndexValue>
                    <IndexRow><Label>上证</Label><span>1.51%</span></IndexRow>
                </IndexBox>
                <Actions>
                    <Action><TradeIcon />交易</Action>
                    <Action><PostIcon />发帖</Action>
                    <Action><AppsIcon />功能</Action>
                    <Action $accent><AddIcon />加自选</Action>
                </Actions>
            </BottomBar>

            <Doodle viewBox="0 0 1080 1400" preserveAspectRatio="none" fill="none" stroke="#de3575" strokeWidth="12" strokeLinecap="round" strokeLinejoin="round">
                <path d="M194 562Q222 536 251 508Q262 485 279 470L303 455Q331 430 358 414Q378 400 387 406Q397 414 398 440Q404 488 402 568L402 617 404 653 407 680" />
                <path d="M386 462Q376 484 374 515Q362 540 352 575Q343 615 324 647Q308 680 303 700L292 760 277 830 262 887Q258 920 249 940Q240 968 231 984L213 1029 192 1071Q180 1105 174 1126Q163 1160 157 1193Q147 1235 145 1260Q139 1310 139 1369" />
            </Doodle>
        </Page>
    );
};

export default App;
